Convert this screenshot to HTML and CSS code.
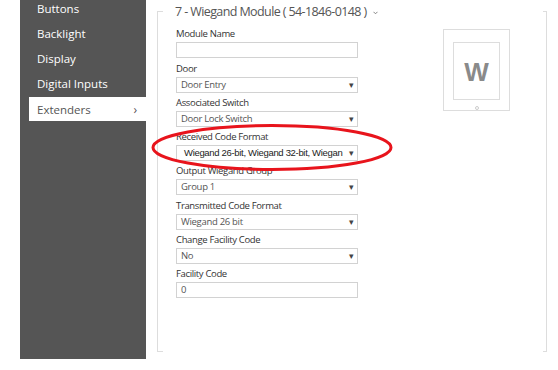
FILE: index.html
```html
<!DOCTYPE html>
<html lang="en">
<head>
  <meta charset="UTF-8">
  <title>Extenders - Wiegand Module</title>
  <link rel="stylesheet" href="styles.css">
</head>
<body>
  <div class="page">
    <nav class="sidebar">
      <a class="menu-item">Buttons</a>
      <a class="menu-item">Backlight</a>
      <a class="menu-item">Display</a>
      <a class="menu-item">Digital Inputs</a>
      <a class="menu-item active">Extenders <span class="chev">&rsaquo;</span></a>
    </nav>

    <section class="module">
      <h2 class="module-title">7 - Wiegand Module ( 54-1846-0148 )
        <svg class="caret" width="5" height="4" viewBox="0 0 5 4"><path d="M0.5 0.8 L2.5 2.8 L4.5 0.8" fill="none" stroke="#777" stroke-width="0.9"/></svg>
      </h2>
      <div class="module-body">
        <form class="fields">
          <label>Module Name</label>
          <div class="field"></div>

          <label>Door</label>
          <div class="field select">Door Entry</div>

          <label>Associated Switch</label>
          <div class="field select">Door Lock Switch</div>

          <label>Received Code Format</label>
          <div class="field select multi">Wiegand 26-bit, Wiegand 32-bit, Wiegan</div>

          <label>Output Wiegand Group</label>
          <div class="field select">Group 1</div>

          <label>Transmitted Code Format</label>
          <div class="field select">Wiegand 26 bit</div>

          <label>Change Facility Code</label>
          <div class="field select">No</div>

          <label>Facility Code</label>
          <div class="field">0</div>
        </form>

        <div class="device">
          <div class="screen">W</div>
          <span class="dot"></span>
        </div>
      </div>
    </section>
  </div>

  <!-- red annotation -->
  <svg class="mark" width="558" height="370" viewBox="0 0 558 370">
    <ellipse cx="272" cy="147.5" rx="119" ry="22" fill="none" stroke="#e8141c" stroke-width="3"/>
  </svg>
</body>
</html>
```

FILE: styles.css
```css
body {
  margin: 0;
  background: #fff;
  font-family: 'Open Sans', sans-serif;
  color: #555;
}

.page {
  display: flex;
  align-items: flex-start;
  padding-left: 20px;
}

.sidebar {
  width: 126px;
  height: 359px;
  background: #555;
  display: flex;
  flex-direction: column;
}

.menu-item {
  display: flex;
  align-items: center;
  height: 25px;
  padding-left: 17px;
  color: #fff;
  font-size: 11.5px;
  margin-top: -4px;
  margin-bottom: 4px;
}

.menu-item.active {
  background: #fff;
  color: #555;
  margin-left: 9px;
  margin-top: -3px;
  padding-left: 8px;
  padding-right: 9px;
  height: 24px;
  justify-content: space-between;
}

.chev {
  font-size: 12px;
}

/* box with only corner ticks on top and bottom */
.module {
  position: relative;
  box-sizing: border-box;
  margin-left: 11px;
  margin-top: 11px;
  width: 390px;
  height: 341px;
  border: 1px solid #ddd;
}

.module::before,
.module::after {
  content: "";
  position: absolute;
  left: 5px;
  right: 3px;
  height: 1px;
  background: #fff;
}

.module::before {
  top: -1px;
}

.module::after {
  bottom: -1px;
}

.module-title {
  position: relative;
  z-index: 1;
  display: block;
  width: fit-content;
  margin: -12px 0 0 17px;
  font-size: 12.5px;
  letter-spacing: -0.6px;
  font-weight: normal;
  color: #555;
  line-height: 24px;
}

.caret {
  margin-left: 4px;
  vertical-align: 1px;
}

.module-body {
  display: flex;
  margin-top: 0;
  padding-left: 18px;
}

.fields {
  display: flex;
  flex-direction: column;
  width: 182px;
}

.fields label {
  font-size: 9.5px;
  letter-spacing: -0.35px;
  color: #333;
  line-height: 12px;
  margin-top: 4.3px;
  margin-bottom: 2px;
}

.field {
  box-sizing: border-box;
  height: 16px;
  border: 1px solid #d2d2d2;
  font-size: 9.5px;
  letter-spacing: -0.3px;
  color: #555;
  padding-left: 4px;
  line-height: 14px;
  position: relative;
  white-space: nowrap;
  overflow: hidden;
}

.select {
  padding-right: 12px;
}

.select::after {
  content: "\25BE";
  position: absolute;
  right: 3px;
  top: 0;
  font-size: 9px;
  color: #444;
}

.multi {
  font-family: 'Liberation Sans', sans-serif;
  font-size: 9.5px;
  letter-spacing: -0.32px;
  color: #222;
  padding-left: 7px;
}

.device {
  margin-left: 85px;
  margin-top: 5px;
  width: 67px;
  height: 82px;
  border: 1px solid #ddd;
  box-sizing: border-box;
  display: flex;
  flex-direction: column;
  align-items: center;
}

.screen {
  margin-top: 12px;
  width: 47px;
  height: 58px;
  border: 1px solid #ddd;
  box-sizing: border-box;
  display: flex;
  align-items: center;
  justify-content: center;
  padding-top: 3px;
  font-family: 'Liberation Sans', sans-serif;
  font-weight: bold;
  font-size: 26px;
  color: #8a8a8a;
}

.dot {
  margin-top: 6px;
  width: 4px;
  height: 4px;
  border: 1px solid #ccc;
  border-radius: 50%;
  box-sizing: border-box;
}

.mark {
  position: absolute;
  left: 0;
  top: 0;
  pointer-events: none;
}
```
